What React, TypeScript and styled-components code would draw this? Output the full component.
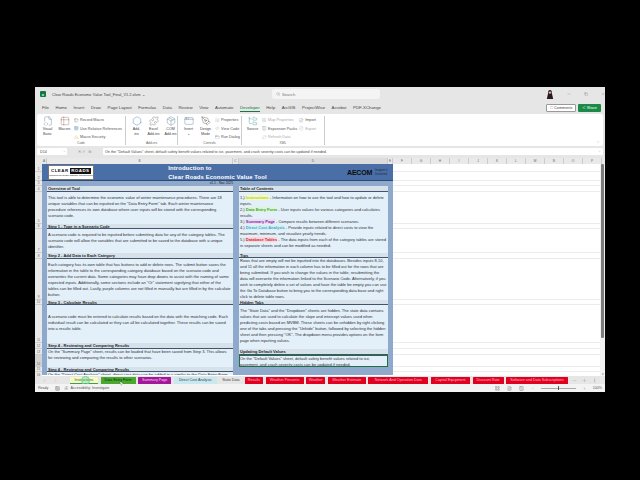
import React from "react";
import styled, { createGlobalStyle } from "styled-components";
import { Search, Minus, Copy, X, MessageSquare, Share2, ChevronDown, ChevronLeft, ChevronRight, Plus, MoreVertical, AlertTriangle, Table2, FileCode2, Puzzle, Hexagon, Grid3x3, PenTool, List, Code2, AppWindow, FileInput, FileOutput, FolderTree, RefreshCw, Package, LayoutGrid, Columns3, FileText, Accessibility as AccIcon, MousePointer2 } from "lucide-react";

const Global = createGlobalStyle`
  html, body { margin: 0; padding: 0; background: #000; width: 640px; height: 480px; overflow: hidden; }
  * { box-sizing: border-box; }
  #root { font-family: "Liberation Sans", Arial, sans-serif; }
`;

const Page = styled.div`
  width: 640px; height: 480px; background: #000; padding: 87px 35px 88px 35px;
`;
const Window = styled.div`
  width: 570px; height: 305px; background: #e6e6e6; display: flex; flex-direction: column; overflow: hidden;
  position: relative; color: #333;
`;
const TitleBar = styled.div`
  height: 14px; display: flex; align-items: center; padding-left: 5px; flex: none; position: relative;
`;
const ExcelBadge = styled.div`
  width: 6px; height: 6px; background: #107c41; border-radius: 1px; color: #fff; font-size: 4px; font-weight: 700;
  display: flex; align-items: center; justify-content: center; margin-right: 6px;
`;
const TitleText = styled.span`
  font-size: 3.9px; color: #444; width: 222px;
`;
const SearchBox = styled.div`
  width: 109px; height: 10px; background: #f4f4f4; border-radius: 2px; display: flex; align-items: center; gap: 2px;
  padding-left: 4px; font-size: 4.2px; color: #777;
`;
const Avatar = styled.svg`
  width: 8px; height: 9px; margin-left: 166px; flex: none;
`;
const WinControls = styled.div`
  display: flex; gap: 13px; margin-left: 13px; color: #555; align-items: center;
`;
const TabsBar = styled.div`
  height: 13px; display: flex; align-items: center; padding-left: 7px; gap: 6.6px; font-size: 4.3px; color: #444; flex: none;
`;
const MenuTab = styled.span<{ $active?: boolean }>`
  white-space: nowrap; padding: 1.5px 0;
  border-bottom: 1px solid ${(p) => (p.$active ? "#107c41" : "transparent")};
  color: ${(p) => (p.$active ? "#1a6b3c" : "#444")};
`;
const TabRight = styled.div`
  margin-left: auto; display: flex; gap: 2px; padding-right: 4px; align-items: center;
`;
const CommentsBtn = styled.div`
  width: 30px; height: 8px; background: #fff; border: 0.5px solid #999; border-radius: 1px; font-size: 3.8px;
  display: flex; align-items: center; justify-content: center; gap: 1px; color: #444;
`;
const ShareBtn = styled.div`
  width: 23px; height: 8px; background: #1b8a47; border-radius: 1px; font-size: 3.8px; color: #fff;
  display: flex; align-items: center; justify-content: center; gap: 1px;
`;
const Ribbon = styled.div`
  height: 32px; margin: 0 2px; background: #fff; border-radius: 2px; display: flex; flex: none; position: relative;
`;
const Group = styled.div<{ $w: number }>`
  width: ${(p) => p.$w}px; border-right: 0.5px solid #ccc; margin: 2px 0 1px; display: flex; flex-direction: column; flex: none;
`;
const GroupItems = styled.div`
  flex: 1; display: flex; gap: 2px; padding-left: 3px;
`;
const GroupLabel = styled.div`
  font-size: 3.3px; color: #666; text-align: center; line-height: 4px;
`;
const BigButton = styled.div<{ $w?: number }>`
  width: ${(p) => p.$w ?? 15}px; display: flex; flex-direction: column; align-items: center; font-size: 3.6px; line-height: 5px;
  color: #444; text-align: center; white-space: pre-line; gap: 1px; flex: none;
`;
const SmallList = styled.div`
  display: flex; flex-direction: column; gap: 1.8px; font-size: 3.8px; color: #555; padding-top: 1px; flex: none;
`;
const SmallItem = styled.div<{ $off?: boolean }>`
  display: flex; align-items: center; gap: 1.5px; height: 6.5px; white-space: nowrap; color: ${(p) => (p.$off ? "#aaa" : "#555")};
`;
const Collapse = styled.div`
  position: absolute; right: 3px; bottom: 2px; color: #666; display: flex;
`;
const FormulaBar = styled.div`
  height: 7px; margin: 2px 2px 1px; display: flex; gap: 2px; align-items: center; flex: none; font-size: 3.7px; color: #444;
`;
const NameBox = styled.div`
  width: 30px; height: 7px; background: #fff; display: flex; align-items: center; justify-content: space-between; padding: 0 1px 0 3px; flex: none; border-radius: 1px;
`;
const FxIcons = styled.div`
  width: 32px; font-size: 4px; color: #888; display: flex; gap: 3px; align-items: center; justify-content: center; flex: none;
`;
const FormulaInput = styled.div`
  flex: 1; height: 7px; background: #fff; display: flex; align-items: center; justify-content: space-between; padding: 0 2px 0 2px; white-space: nowrap; overflow: hidden; border-radius: 1px;
`;
const ColHeaders = styled.div`
  height: 6px; display: flex; background: #e9e9e9; flex: none; font-size: 3.2px; color: #666; padding-left: 7px; margin-top: 2px;
`;
const ColHead = styled.div<{ $w: number; $sel?: boolean }>`
  width: ${(p) => p.$w}px; text-align: center; line-height: 6px; flex: none; border-right: 0.5px solid #ccc;
  background: ${(p) => (p.$sel ? "#dcdcdc" : "transparent")};
  color: #666;
`;
const Sheet = styled.div`
  flex: 1; min-height: 0; display: flex; background: #fff; position: relative; overflow: hidden;
`;
const RowHeaders = styled.div`
  width: 7px; background: #e9e9e9; flex: none; display: flex; flex-direction: column;
`;
const RowHead = styled.div<{ $h: number; $sel?: boolean }>`
  height: ${(p) => p.$h}px; font-size: 3.1px; color: #666; display: flex; align-items: flex-end; justify-content: center; flex: none;
  border-bottom: 0.5px solid #ccc; background: ${(p) => (p.$sel ? "#d2d2d2" : "transparent")};
`;
const Panel = styled.div`
  width: 351px; flex: none; background: #8fa9cd; display: flex; flex-direction: column; height: 211px;
`;
const Banner = styled.div`
  height: 17px; background: #4a6fa6; flex: none; position: relative; display: flex; flex-direction: column; align-items: center;
  color: #fff; font-weight: 700; font-size: 5.9px; line-height: 8.5px; letter-spacing: 0.12px; border-bottom: 0.5px solid #2f4a73;
`;
const LogoBox = styled.div`
  position: absolute; left: 6px; top: 1px; width: 46px; height: 15px; background: #fff; border: 0.5px solid #777;
  display: flex; flex-direction: column; align-items: center; justify-content: center; letter-spacing: 0;
`;
const LogoWord = styled.div`
  display: flex; font-size: 4.4px; line-height: 6px; font-weight: 700; color: #111; letter-spacing: 0.5px; align-items: center; gap: 1px;
`;
const LogoDark = styled.span`
  background: #111; color: #fff; padding: 0 1.5px;
`;
const LogoSub = styled.div`
  font-size: 2.4px; line-height: 3px; font-weight: 400; color: #111; white-space: nowrap;
`;
const AecomMark = styled.div`
  position: absolute; right: 5px; top: 4.5px; display: flex; align-items: center; gap: 3px; color: #111;
`;
const AecomWord = styled.span`
  font-size: 7px; line-height: 8px; font-weight: 700; letter-spacing: -0.2px; color: #0c0c0c;
`;
const AecomSub = styled.span`
  font-size: 2.8px; line-height: 3.4px; font-weight: 400; color: #1b2a45; letter-spacing: 0;
`;
const Version = styled.div`
  height: 5px; flex: none; font-size: 3.3px; line-height: 5px; color: #222; padding-left: 5px; width: 191px; text-align: right;
`;
const Columns = styled.div`
  display: flex; gap: 6px; padding: 0 5px; flex: 1; min-height: 0; overflow: hidden;
`;
const Col = styled.div<{ $w: number }>`
  width: ${(p) => p.$w}px; flex: none; display: flex; flex-direction: column;
`;
const SecHead = styled.div<{ $h?: number }>`
  height: ${(p) => p.$h ?? 6}px; flex: none; background: #d7e1ea; border-bottom: 0.8px solid #44546a; font-size: 4px; font-weight: 700;
  line-height: 5px; color: #262626; padding-left: 1px; white-space: nowrap;
`;
const SecBody = styled.div<{ $h: number; $sel?: boolean; $pad?: number }>`
  height: ${(p) => p.$h}px; flex: none; background: #e3f0fa; font-size: 4.03px; line-height: 6px; color: #2f2f2f;
  padding: ${(p) => p.$pad ?? 2}px 1px 0 1px; overflow: hidden;
  ${(p) => (p.$sel ? "outline: 1px solid #1f7145; outline-offset: -1px; padding-top: 0.5px;" : "")}
`;
const Mark = styled.span<{ $c: string; $t: string }>`
  background: ${(p) => p.$c}; color: ${(p) => p.$t}; font-weight: 700;
`;
const GridArea = styled.div`
  flex: 1; height: 100%; display: flex; flex-direction: column;
  background-image: linear-gradient(to right, #e4e4e4 0.5px, transparent 0.5px);
  background-size: 19px 100%; background-position: 19px 0;
`;
const GridRow = styled.div<{ $h: number }>`
  height: ${(p) => p.$h}px; flex: none; border-bottom: 0.5px solid #ececec;
`;
const ScrollBar = styled.div`
  width: 5px; flex: none; background: #f1f1f1; display: flex; flex-direction: column; align-items: center; font-size: 3px; color: #555;
`;
const ScrollThumb = styled.div`
  width: 2.5px; height: 174px; flex: none; background: #7c7c7c; border-radius: 1px; margin-bottom: auto; 
`;
const ScrollArrow = styled.span`
  line-height: 4px; flex: none;
`;
const SheetTabs = styled.div`
  height: 8px; display: flex; flex: none; align-items: center; gap: 2.6px; padding-left: 35px; background: #e6e6e6; position: relative;
`;
const SheetTab = styled.div<{ $w: number; $bg: string; $fg: string; $active?: boolean }>`
  width: ${(p) => p.$w}px; height: 7px; background: ${(p) => p.$bg}; color: ${(p) => p.$fg}; font-size: 3.7px; line-height: 7px;
  text-align: center; white-space: nowrap; overflow: hidden; flex: none; border-radius: 0.5px;
  border-bottom: ${(p) => (p.$active ? "0.8px solid #3f9e55" : "none")};
`;
const Nav = styled.div`
  position: absolute; left: 7px; top: 1.5px; display: flex; gap: 6px; color: #888;
`;
const ClickRing = styled.div`
  position: absolute; left: 46px; top: 0px; width: 9px; height: 9px; border-radius: 50%; border: 1px solid #6fd5a0; background: rgba(90, 210, 150, 0.35);
`;
const TabCtrl = styled.div`
  position: absolute; right: 8px; top: 1.5px; display: flex; gap: 5px; color: #777;
`;
const Status = styled.div`
  height: 8px; flex: none; background: #f3f3f3; display: flex; align-items: center; padding-left: 3px; font-size: 3.6px; color: #555; position: relative;
`;
const StatusItem = styled.div<{ $ml?: number }>`
  display: flex; gap: 1.5px; align-items: center; margin-left: ${(p) => p.$ml ?? 0}px; white-space: nowrap;
`;
const StatusRight = styled.div`
  margin-left: auto; display: flex; align-items: center; gap: 7px; padding-right: 3px;
`;
const Slider = styled.div`
  width: 35px; height: 1px; background: #aaa; position: relative;
`;
const SliderKnob = styled.div`
  position: absolute; left: 17px; top: -1.5px; width: 1.5px; height: 4px; background: #555;
`;
const Cursor = styled.div`
  position: absolute; left: 84px; top: -3px; color: #333; display: flex;
`;

const menu = ["File", "Home", "Insert", "Draw", "Page Layout", "Formulas", "Data", "Review", "View", "Automate", "Developer", "Help", "ArcGIS", "ProjectWise", "Acrobat", "PDF-XChange"];
const cols: [string, number, boolean?][] = [["A", 5], ["B", 186], ["C", 6], ["D", 149, true], ["E", 5], ["F", 19], ["G", 19], ["H", 19], ["I", 19], ["J", 19], ["K", 19], ["L", 19], ["M", 19], ["N", 19], ["O", 19], ["P", 19]];
const rows: [number, number, boolean?][] = [[1, 8], [2, 9], [3, 5], [4, 6], [5, 32], [6, 5], [7, 24], [8, 6], [9, 41], [10, 5], [11, 38], [12, 6], [13, 6], [14, 12, true], [15, 5], [16, 6]];
const tabs: [string, number, string, string][] = [
  ["Instructions", 28, "#f6fbc4", "#444"], ["Data Entry Form", 35, "#4aa82b", "#123"], ["Summary Page", 33, "#a3189b", "#f3d8f0"],
  ["Direct Cost Analysis", 43, "#c9e9ef", "#345"], ["State Data", 23, "#e6e6e6", "#444"], ["Results", 18, "#e2001f", "#fbd"],
  ["Weather Percents", 38, "#e2001f", "#fbd"], ["Weather", 19, "#e2001f", "#fbd"], ["Weather Estimate", 38, "#e2001f", "#fbd"],
  ["Network And Operation Data", 60, "#e2001f", "#fbd"], ["Capital Equipment", 39, "#e2001f", "#fbd"], ["Discount Rate", 31, "#e2001f", "#fbd"], ["Software and Data Subscriptions", 62, "#e2001f", "#fbd"],
];
const formula = 'On the "Default Values" sheet, default safety benefit values related to ice, pavement, and crash severity costs can be updated if needed.';

export default function App() {
  const s = 5;
  const ic = { size: 10, strokeWidth: 1, color: "#5f7f9a" };
  const sm = { size: 4.5, strokeWidth: 1.2, color: "#6a7f95" };
  return (
    <Page>
      <Global />
      <Window>
        <TitleBar>
          <ExcelBadge>x</ExcelBadge>
          <TitleText>Clear Roads Economic Value Tool_Final_V1.2.xlsm ⌄</TitleText>
          <SearchBox><Search size={4} strokeWidth={1.5} />Search</SearchBox>
          <Avatar viewBox="0 0 8 9"><path d="M4 0C2.6 0 2 1.3 2.2 3L.8 9h6.4L5.8 3C6 1.3 5.4 0 4 0Z" fill="#2a1a1c" /><circle cx="4" cy="2.6" r="1.2" fill="#d9b9a6" /></Avatar>
          <WinControls><Minus size={4} strokeWidth={1.2} /><Copy size={4} strokeWidth={1.2} /><X size={4} strokeWidth={1.2} /></WinControls>
        </TitleBar>
        <TabsBar>
          {menu.map((m) => <MenuTab key={m} $active={m === "Developer"}>{m}</MenuTab>)}
          <TabRight>
            <CommentsBtn><MessageSquare size={3.5} strokeWidth={1.2} />Comments</CommentsBtn>
            <ShareBtn><Share2 size={3.5} strokeWidth={1.2} />Share</ShareBtn>
          </TabRight>
        </TabsBar>
        <Ribbon>
          <Group $w={89}>
            <GroupItems>
              <BigButton><FileCode2 {...ic} />{"Visual\nBasic"}</BigButton>
              <BigButton><Table2 {...ic} color="#a06a6a" />Macros</BigButton>
              <SmallList>
                <SmallItem><Table2 {...sm} />Record Macro</SmallItem>
                <SmallItem><Grid3x3 {...sm} color="#3a6ea5" />Use Relative References</SmallItem>
                <SmallItem><AlertTriangle {...sm} color="#d9a420" />Macro Security</SmallItem>
              </SmallList>
            </GroupItems>
            <GroupLabel>Code</GroupLabel>
          </Group>
          <Group $w={52}>
            <GroupItems>
              <BigButton><Hexagon {...ic} color="#3a78b5" />{"Add-\nins"}</BigButton>
              <BigButton><Puzzle {...ic} color="#666" />{"Excel\nAdd-ins"}</BigButton>
              <BigButton><Package {...ic} />{"COM\nAdd-ins"}</BigButton>
            </GroupItems>
            <GroupLabel>Add-ins</GroupLabel>
          </Group>
          <Group $w={64}>
            <GroupItems>
              <BigButton><AppWindow {...ic} />{"Insert\n⌄"}</BigButton>
              <BigButton><PenTool {...ic} color="#555" />{"Design\nMode"}</BigButton>
              <SmallList>
                <SmallItem><List {...sm} />Properties</SmallItem>
                <SmallItem><Code2 {...sm} />View Code</SmallItem>
                <SmallItem><AppWindow {...sm} />Run Dialog</SmallItem>
              </SmallList>
            </GroupItems>
            <GroupLabel>Controls</GroupLabel>
          </Group>
          <Group $w={83}>
            <GroupItems>
              <BigButton><FolderTree {...ic} color="#3f8f8f" />Source</BigButton>
              <SmallList>
                <SmallItem $off><LayoutGrid {...sm} color="#aaa" />Map Properties</SmallItem>
                <SmallItem><Columns3 {...sm} />Expansion Packs</SmallItem>
                <SmallItem $off><RefreshCw {...sm} color="#aaa" />Refresh Data</SmallItem>
              </SmallList>
              <SmallList>
                <SmallItem><FileInput {...sm} />Import</SmallItem>
                <SmallItem $off><FileOutput {...sm} color="#aaa" />Export</SmallItem>
              </SmallList>
            </GroupItems>
            <GroupLabel>XML</GroupLabel>
          </Group>
          <Collapse><ChevronDown size={4} strokeWidth={1.2} /></Collapse>
        </Ribbon>
        <FormulaBar>
          <NameBox>D14<ChevronDown size={3} strokeWidth={1.2} /></NameBox>
          <FxIcons>✕ ✓ <i>fx</i></FxIcons>
          <FormulaInput>{formula}<ChevronDown size={3} strokeWidth={1.2} /></FormulaInput>
        </FormulaBar>
        <ColHeaders>
          {cols.map(([c, w, sel]) => <ColHead key={c} $w={w} $sel={sel}>{c}</ColHead>)}
        </ColHeaders>
        <Sheet>
          <RowHeaders>
            {rows.map(([n, h, sel]) => <RowHead key={n} $h={h} $sel={sel}>{n}</RowHead>)}
          </RowHeaders>
          <Panel>
            <Banner>
              <LogoBox>
                <LogoWord>CLEAR<LogoDark>ROADS</LogoDark></LogoWord>
                <LogoSub>research for winter highway maintenance</LogoSub>
              </LogoBox>
              Introduction to<br />Clear Roads Economic Value Tool
              <AecomMark><AecomWord>AECOM</AecomWord><AecomSub>Imagine it.<br />Delivered.</AecomSub></AecomMark>
            </Banner>
            <Version>v1.1 - Nov 2025</Version>
            <Columns>
              <Col $w={186}>
                <SecHead>Overview of Tool</SecHead>
                <SecBody $h={32} $pad={3}>This tool is able to determine the economic value of winter maintenance procedures. There are 18 unique variables that can be inputted on the "Data Entry Form" tab. Each winter maintenance procedure references its own database where user inputs will be stored with the corresponding scenario code.</SecBody>
                <SecHead $h={5}>Step 1 - Type in a Scenario Code</SecHead>
                <SecBody $h={24} $pad={3}>A scenario code is required to be inputted before submitting data for any of the category tables. The scenario code will allow the variables that are submitted to be saved to the database with a unique identifier.</SecBody>
                <SecHead>Step 2 - Add Data to Each Category</SecHead>
                <SecBody $h={41} $pad={3}>Each category has its own table that has buttons to add or delete rows. The submit button saves the information in the table to the corresponding category database based on the scenario code and overwrites the current data. Some categories may have drop downs to assist with the naming of some expected inputs. Additionally, some sections include an "Or" statement signifying that either of the tables can be filled out. Lastly, purple columns are not filled in manually but are filled in by the calculate button.</SecBody>
                <SecHead $h={5}>Step 3 - Calculate Results</SecHead>
                <SecBody $h={38} $pad={9}>A scenario code must be entered to calculate results based on the data with the matching code. Each individual result can be calculated or they can all be calculated together. These results can be saved into a results table.</SecBody>
                <SecHead>Step 4 - Reviewing and Comparing Results</SecHead>
                <SecBody $h={18} $pad={0}>On the "Summary Page" sheet, results can be loaded that have been saved from Step 3. This allows for reviewing and comparing the results to other scenarios.</SecBody>
                <SecHead $h={5}>Step 4 - Reviewing and Comparing Results</SecHead>
                <SecBody $h={6} $pad={0}>On the "Direct Cost Analysis" sheet, direct cost data can be added in a similar to the Data Entry Form</SecBody>
              </Col>
              <Col $w={149}>
                <SecHead>Table of Contents</SecHead>
                <SecBody $h={61} $pad={3}>
                  1.) <Mark $c="#f3fbb5" $t="#b8c94a">Instructions</Mark> - Information on how to use the tool and how to update or delete inputs.<br />
                  2.) <Mark $c="#dff5d5" $t="#3ea53a">Data Entry Form</Mark> - User inputs values for various categories and calculates results.<br />
                  3.) <Mark $c="#ecdcf3" $t="#7b2d9b">Summary Page</Mark> - Compare results between different scenarios.<br />
                  4.) <Mark $c="#d5eff5" $t="#45a8c0">Direct Cost Analysis</Mark> - Provide inputs related to direct costs to view the maximum, minimum, and visualize yearly trends.<br />
                  5.) <Mark $c="#f8d8dc" $t="#d21f35">Database Tables</Mark> - The data inputs from each of the category tables are stored in separate sheets and can be modified as needed.
                </SecBody>
                <SecHead $h={5}>Tips</SecHead>
                <SecBody $h={42} $pad={0}>Rows that are empty will not be inputted into the databases. Besides inputs 8,10, and 11 all the information in each column has to be filled out for the rows that are being submitted. If you wish to change the values in the table, resubmitting the data will overwrite the information linked to the Scenario Code. Alternatively, if you wish to completely delete a set of values and have the table be empty you can use the Go To Database button to bring you to the corresponding data base and right click to delete table rows.</SecBody>
                <SecHead $h={5}>Hidden Tabs</SecHead>
                <SecBody $h={44} $pad={3}>The "State Data" and the "Dropdown" sheets are hidden. The state data contains values that are used to calculate the slope and intercept values used when predicting costs based on MVBM. These sheets can be unhidden by right clicking one of the tabs and pressing the "Unhide" button, followed by selecting the hidden sheet and then pressing "OK". The dropdown menu provides options on the form page when inputting values.</SecBody>
                <SecHead $h={6}>Updating Default Values</SecHead>
                <SecBody $h={12} $sel $pad={0}>On the "Default Values" sheet, default safety benefit values related to ice, pavement, and crash severity costs can be updated if needed.</SecBody>
              </Col>
            </Columns>
          </Panel>
          <GridArea>
            {rows.map(([n, h]) => <GridRow key={n} $h={h} />)}
          </GridArea>
          <ScrollBar>
            <ScrollThumb />
            <ScrollArrow>▾</ScrollArrow>
          </ScrollBar>
        </Sheet>
        <SheetTabs>
          <Nav><ChevronLeft size={s} strokeWidth={1} /><ChevronRight size={s} strokeWidth={1} /></Nav>
          <ClickRing />
          {tabs.map(([t, w, bg, fg], i) => <SheetTab key={t} $w={w} $bg={bg} $fg={fg} $active={i === 0}>{t}</SheetTab>)}
          <TabCtrl><Minus size={s} strokeWidth={1} /><Plus size={s} strokeWidth={1} /><MoreVertical size={s} strokeWidth={1} /></TabCtrl>
        </SheetTabs>
        <Status>
          Ready
          <StatusItem $ml={7}><Grid3x3 size={5} strokeWidth={1.2} /></StatusItem>
          <StatusItem $ml={4}><AccIcon size={4.5} strokeWidth={1.2} />Accessibility: Investigate</StatusItem>
          <Cursor><MousePointer2 size={5} strokeWidth={1} fill="#fff" /></Cursor>
          <StatusRight>
            <LayoutGrid size={5} strokeWidth={1.2} />
            <FileText size={5} strokeWidth={1.2} />
            <Columns3 size={5} strokeWidth={1.2} />
            <Minus size={3} strokeWidth={1} />
            <Slider><SliderKnob /></Slider>
            <Plus size={3} strokeWidth={1} />
            100%
          </StatusRight>
        </Status>
      </Window>
    </Page>
  );
}
